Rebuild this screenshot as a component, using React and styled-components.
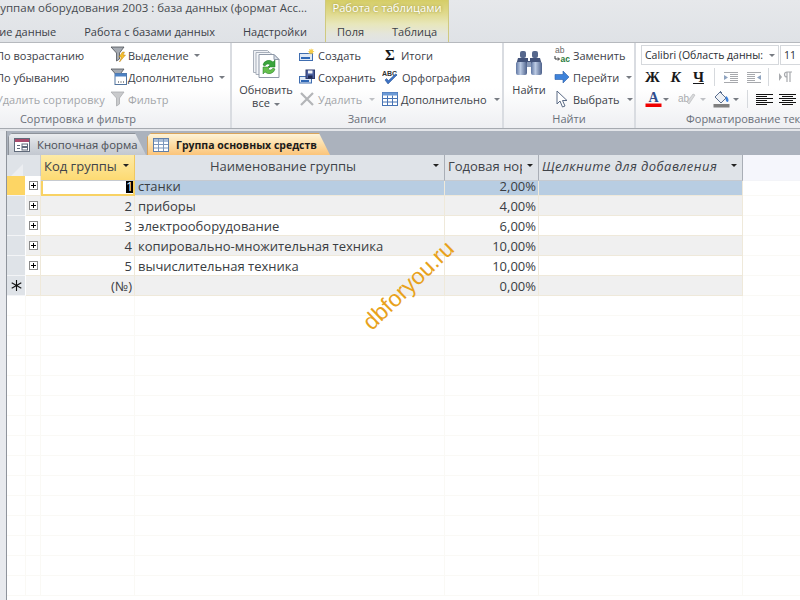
import styled, { createGlobalStyle } from "styled-components";

const GlobalStyle = createGlobalStyle`
  html, body { margin: 0; padding: 0; height: 100%; background: #fff; overflow: hidden; }
  #root { height: 100%; }
`;

const Page = styled.div`
  position: relative;
  width: 800px;
  height: 600px;
  overflow: hidden;
  font-family: "Open Sans", "Noto Sans", sans-serif;
  font-size: 11px;
  color: #3c4046;
`;

/* top: window title + ribbon tabs */
const TopBar = styled.div`
  display: flex;
  height: 42px;
  background: linear-gradient(#e6e8eb, #dfe2e6);
  border-bottom: 1px solid #b6b9be;
`;
const MainTop = styled.div`
  width: 325px;
  flex: none;
  display: flex;
  flex-direction: column;
  align-items: flex-end;
  overflow: hidden;
`;
const Title = styled.div`
  height: 16px;
  line-height: 16px;
  padding-right: 18px;
  font-size: 11.5px;
  white-space: nowrap;
  color: #474b50;
`;
const TabRow = styled.div`
  display: flex;
  height: 26px;
  padding: 5px ${(p) => p.$right || 0}px 0 0;
  margin-left: ${(p) => p.$ml || 0}px;
  box-sizing: border-box;
  align-items: center;
  white-space: nowrap;
`;
const RibbonTab = styled.span`
  padding: 0 14px;
  color: #3c4148;
`;
const ContextTop = styled.div`
  width: 124px;
  flex: none;
  box-sizing: border-box;
  background: linear-gradient(#d5cd66 0, #e0da8f 14px, #e8e7bb 24px, #e4e5dc 34px, #e0e3e6 42px);
  border-left: 1px solid #cfc97f;
  border-right: 1px solid #cfc97f;
`;
const ContextTitle = styled.div`
  height: 16px;
  line-height: 16px;
  font-size: 11.2px;
  text-align: center;
  color: #fff;
  text-shadow: 0 0 3px #8f8a30;
  white-space: nowrap;
`;

/* ribbon */
const Ribbon = styled.div`
  display: flex;
  height: 85px;
  background: linear-gradient(#fff 0, #fff 45px, #eeeff2 85px);
  border-bottom: 1px solid #a6aab0;
`;
const Group = styled.div`
  flex: none;
  width: ${(p) => p.$w}px;
  margin-left: ${(p) => p.$ml || 0}px;
  display: flex;
  flex-direction: column;
  box-sizing: border-box;
  border-right: ${(p) => (p.$last ? "0" : "2px solid #d9dce1")};
`;
const GroupBody = styled.div`
  height: 68px;
  display: flex;
  padding: 1px 0 0 ${(p) => p.$pl || 0}px;
  box-sizing: border-box;
`;
const FontBody = styled.div`
  height: 68px;
  padding-top: 1px;
  box-sizing: border-box;
`;
const GroupLabel = styled.div`
  height: 17px;
  line-height: 15px;
  text-align: ${(p) => (p.$pl ? "left" : "center")};
  padding-left: ${(p) => p.$pl || 0}px;
  color: #6a7079;
  white-space: nowrap;
`;
const ToolColumn = styled.div`
  width: ${(p) => p.$w}px;
  margin-left: ${(p) => p.$ml || 0}px;
  flex: none;
  display: flex;
  flex-direction: column;
`;
const Tool = styled.div`
  height: 22px;
  display: flex;
  align-items: center;
  gap: ${(p) => p.$gap ?? 3}px;
  white-space: nowrap;
  color: ${(p) => (p.$off ? "#a3a5a9" : "#3c4148")};
  svg { flex: none; }
`;
const Caret = styled.span`
  display: inline-block;
  margin-left: ${(p) => p.$ml ?? 4}px;
  border: 3px solid transparent;
  border-top: 3px solid ${(p) => (p.$off ? "#bfc1c5" : "#777b82")};
  border-bottom: 0;
  vertical-align: middle;
`;
const BigTool = styled.div`
  flex: none;
  width: ${(p) => p.$w}px;
  margin-left: ${(p) => p.$ml}px;
  display: flex;
  flex-direction: column;
  align-items: center;
  line-height: 13px;
  text-align: center;
  color: #3c4148;
  svg { margin: 6px 0 ${(p) => p.$below}px; }
`;

/* font group */
const FontRow = styled.div`
  display: flex;
  height: 22px;
  align-items: center;
  padding-left: 5px;
`;
const Combo = styled.div`
  width: ${(p) => p.$w}px;
  height: 20px;
  flex: none;
  box-sizing: border-box;
  margin-right: 1px;
  background: #fff;
  border: 1px solid #d5d8dc;
  padding: 0 3px;
  line-height: 18px;
  font-size: 10.5px;
  color: #2a2e33;
  display: flex;
  justify-content: space-between;
  align-items: center;
  white-space: nowrap;
  overflow: hidden;
`;
const FmtButton = styled.span`
  width: ${(p) => p.$w || 23}px;
  flex: none;
  text-align: center;
  font-family: "Liberation Serif", serif;
  font-size: 15px;
  font-weight: 700;
  font-style: ${(p) => (p.$i ? "italic" : "normal")};
  text-decoration: ${(p) => (p.$u ? "underline" : "none")};
  color: #17181a;
`;
const FmtSep = styled.span`
  width: 1px;
  height: 18px;
  flex: none;
  margin: 0 ${(p) => p.$m}px 0 ${(p) => p.$l ?? p.$m}px;
  background: #d6d9dd;
`;
const FontIcon = styled.span`
  width: ${(p) => p.$w}px;
  margin-left: ${(p) => p.$ml || 0}px;
  flex: none;
  display: flex;
  align-items: center;
`;

/* document tabs */
const Gap = styled.div`
  height: 2px;
  background: #e3e5e9;
`;
const Workspace = styled.div`
  display: flex;
  height: 469px;
`;
const NavSliver = styled.div`
  width: 7px;
  flex: none;
  box-sizing: border-box;
  background: #e8eaee;
  border-right: 1px solid #8f949c;
`;
const DocArea = styled.div`
  flex: 1;
  display: flex;
  flex-direction: column;
`;
const DocTabs = styled.div`
  height: 24px;
  flex: none;
  display: flex;
  align-items: flex-end;
  gap: 1px;
  padding-left: 1px;
  background: #abb2bd;
`;
const DocTab = styled.div`
  height: 22px;
  width: ${(p) => p.$w}px;
  flex: none;
  box-sizing: border-box;
  display: flex;
  align-items: center;
  gap: 7px;
  padding-left: 5px;
  border-top: 1px solid ${(p) => (p.$active ? "#d9a45a" : "#8d929a")};
  border-left: 1px solid ${(p) => (p.$active ? "#d9a45a" : "#8d929a")};
  clip-path: polygon(0 100%, 0 4px, 4px 0, ${(p) => p.$w - 11}px 0, ${(p) => p.$w}px 100%);
  white-space: nowrap;
  font-size: ${(p) => (p.$active ? 10.5 : 11.3)}px;
  font-weight: ${(p) => (p.$active ? 700 : 400)};
  color: ${(p) => (p.$active ? "#1b1b1b" : "#4a4e55")};
  background: ${(p) =>
    p.$active
      ? "linear-gradient(#fdf3d8, #fddfa9 45%, #fbc47a)"
      : "linear-gradient(#eaecef, #d3d7dd 50%, #c3c8d0)"};
  svg { flex: none; }
`;

/* datasheet */
const Sheet = styled.div`
  flex: 1;
  display: flex;
  flex-direction: column;
  overflow: hidden;
  font-size: 13px;
  color: #3a3d42;
`;
const Row = styled.div`
  display: grid;
  grid-template-columns: 19px 15px 94px 310px 94px 204px 1fr;
  height: ${(p) => p.$h || 20}px;
  flex: none;
`;
const Cell = styled.div`
  box-sizing: border-box;
  border-right: 1px solid #efe9da;
  border-bottom: 1px solid #efe9da;
  line-height: 20px;
  padding: 0 ${(p) => (p.$right ? 2 : 3)}px;
  text-align: ${(p) => (p.$right ? "right" : "left")};
  white-space: nowrap;
  overflow: hidden;
  background: ${(p) => (p.$sel ? "#b8cde2" : p.$alt ? "#f0f0f0" : "#fff")};
`;
const FillCell = styled.div`
  box-sizing: border-box;
  border-right: 1px solid #faf9f5;
  border-bottom: 1px solid #faf9f5;
`;
const BlankCell = styled.div`
  box-sizing: border-box;
  border-bottom: 1px solid #faf9f5;
`;
const ActiveCell = styled(Cell)`
  display: flex;
  justify-content: flex-end;
  align-items: center;
  border: 2px solid #f8d264;
  padding: 0;
`;
const SelText = styled.span`
  width: 7px;
  height: 14px;
  line-height: 14px;
  text-align: center;
  background: #000;
  color: #fff;
`;
const Selector = styled.div`
  box-sizing: border-box;
  background: ${(p) => (p.$current ? "#fdd564" : "#dfe3e8")};
  border-right: 1px solid #fff;
  border-bottom: 1px solid #f3f4f6;
  display: flex;
  align-items: center;
  justify-content: center;
`;
const Expander = styled(Cell)`
  display: flex;
  align-items: center;
  padding: 0 0 0 3px;
`;
const Plus = styled.span`
  position: relative;
  width: 9px;
  height: 9px;
  box-sizing: border-box;
  background: #fff;
  border: 1px solid #8a8a8a;
  &::before, &::after {
    content: "";
    position: absolute;
    background: #000;
  }
  &::before { left: 1px; top: 3px; width: 5px; height: 1px; }
  &::after { left: 3px; top: 1px; width: 1px; height: 5px; }
`;
const Corner = styled.div`
  grid-column: span 2;
  box-sizing: border-box;
  background: #dfe3e8;
  border-right: 1px solid #c6cad0;
  border-bottom: 1px solid #c6cad0;
  padding: 7px 0 0 4px;
`;
const Head = styled.div`
  box-sizing: border-box;
  display: flex;
  align-items: center;
  justify-content: ${(p) => (p.$center ? "center" : "flex-start")};
  position: relative;
  padding: 0 ${(p) => (p.$center ? 16 : 0)}px 3px 3px;
  line-height: 18px;
  white-space: nowrap;
  overflow: hidden;
  font-style: ${(p) => (p.$italic ? "italic" : "normal")};
  letter-spacing: ${(p) => (p.$italic ? 0.45 : 0)}px;
  color: #40444a;
  background: ${(p) => (p.$active ? "linear-gradient(#fdeaa6, #fdda72)" : "#dfe3e8")};
  border-right: 1px solid ${(p) => (p.$active ? "#f0c860" : "#a9aeb6")};
  border-bottom: 1px solid #c6cad0;
`;
const HeadText = styled.span`
  display: block;
  max-width: ${(p) => (p.$clip ? `${p.$clip}px` : "none")};
  overflow: hidden;
`;
const HeadArrow = styled.span`
  position: absolute;
  right: 5px;
  top: 9px;
  border: 3px solid transparent;
  border-top: 3px solid #222;
  border-bottom: 0;
`;
const HeadRest = styled.div`
  background: #f5f6fc;
  border-bottom: 1px solid #f3f4f8;
`;
const Watermark = styled.div`
  position: absolute;
  left: 343px;
  top: 270px;
  width: 130px;
  text-align: center;
  font-family: "Liberation Sans", Arial, sans-serif;
  font-size: 23px;
  line-height: 30px;
  color: #e8a21c;
  transform: rotate(-44deg);
  white-space: nowrap;
`;

/* icons */
const Funnel = ({ off }) => (
  <path d="M1 1h13L9.500 7v6l-3 2V7z" fill={off ? "#c9cacc" : "#a6abb2"} stroke={off ? "#a9abae" : "#4d5157"} strokeWidth=".8" />
);
const SelectionIcon = () => (
  <svg width="17" height="18" viewBox="0 0 17 18"><Funnel /><path d="M12.500 6L9 11h2.500l-2 5 6-7H13l1.500-3z" fill="#f6c02c" stroke="#b8801a" strokeWidth=".5" /></svg>
);
const AdvancedIcon = () => (
  <svg width="17" height="18" viewBox="0 0 17 18"><Funnel /><rect x="5" y="5.500" width="11.500" height="11" fill="#fff" stroke="#52749e" /><rect x="5" y="5.500" width="11.500" height="3" fill="#4d82c4" /><path d="M8 14h1M10.500 14h1M13 14h1" stroke="#333" /></svg>
);
const FilterIcon = () => (
  <svg width="17" height="17" viewBox="0 0 17 17"><Funnel off /></svg>
);
const RefreshIcon = () => (
  <svg width="27" height="28" viewBox="0 0 27 28">
    <path d="M.5.500h14l3 3v19H.5z" fill="#f0f2f6" stroke="#a9b0bb" />
    <path d="M3 2.500h14l3 3v19H3z" fill="#f4f6f9" stroke="#a9b0bb" />
    <path d="M6 4.500h15l5 5v18H6z" fill="#fff" stroke="#8f99a8" />
    <path d="M21 4.500v5h5z" fill="#dce3ec" stroke="#8f99a8" />
    <path d="M10 15a6 6 0 0 1 10-3l2-2v7h-7l2-2a3 3 0 0 0-5 1z" fill="#3aa53c" stroke="#1f7a25" strokeWidth=".5" />
    <path d="M22 19a6 6 0 0 1-10 3l-2 2v-7h7l-2 2a3 3 0 0 0 5-1z" fill="#66c04d" stroke="#1f7a25" strokeWidth=".5" />
  </svg>
);
const NewIcon = () => (
  <svg width="16" height="16" viewBox="0 0 16 16"><rect x="0.500" y="6.500" width="13" height="7" fill="#dfe9f6" stroke="#3f6db0" /><rect x="2" y="10" width="9" height="2" fill="#2f67b5" /><path d="M12 1l.7 1.700L14.500 2l-.7 1.800 1.700.7-1.700.7.7 1.800-1.800-.7-.7 1.700-.7-1.700-1.800.7.7-1.800L9 4.500l1.700-.7L10 2l1.800.7z" fill="#f6cc4a" /></svg>
);
const SaveIcon = () => (
  <svg width="16" height="16" viewBox="0 0 16 16"><rect x="0.500" y="7.500" width="12" height="6.500" fill="#dfe9f6" stroke="#3f6db0" /><rect x="2" y="11" width="8" height="2" fill="#2f67b5" /><rect x="7" y="1" width="8.500" height="8.500" fill="#4b5f9e" stroke="#2e3b6d" /><rect x="9" y="1.500" width="4.500" height="3" fill="#eef1f7" /><rect x="9" y="6.500" width="4.500" height="3" fill="#1f2a52" /></svg>
);
const DeleteIcon = () => (
  <svg width="16" height="16" viewBox="0 0 16 16"><path d="M2 2l12 12M14 2L2 14" stroke="#b3b5b8" strokeWidth="2.200" /></svg>
);
const SpellIcon = () => (
  <svg width="17" height="17" viewBox="0 0 17 17"><text x="0" y="7" fontSize="7" fontWeight="700" fontFamily="Liberation Sans" fill="#333">ABC</text><path d="M3 11l3 4 9-9-1.500-1L6.500 11.500 4.500 9.500z" fill="#3c71c4" stroke="#24508f" strokeWidth=".5" /></svg>
);
const TableIcon = () => (
  <svg width="16" height="16" viewBox="0 0 16 16"><rect x="0.500" y="1.500" width="15" height="13" fill="#fff" stroke="#4673b4" /><rect x="0.500" y="1.500" width="15" height="3" fill="#6c9ad6" /><path d="M5.500 4.500v10M10.500 4.500v10M.5 7.500h15M.5 11h15" stroke="#4673b4" /></svg>
);
const Binoculars = () => (
  <svg width="28" height="26" viewBox="0 0 28 26">
    <defs>
      <linearGradient id="bin" x1="0" x2="1" y1="0" y2="0">
        <stop offset="0" stopColor="#5f76a2" /><stop offset=".4" stopColor="#bccbe4" /><stop offset="1" stopColor="#4d618b" />
      </linearGradient>
    </defs>
    <rect x="5" y="1" width="6" height="7" rx="2" fill="#56678c" />
    <rect x="17" y="1" width="6" height="7" rx="2" fill="#56678c" />
    <path d="M3 8h10v3h2V8h10l2 7H16v1h-4v-1H1z" fill="#43537a" />
    <rect x="1" y="12" width="11" height="13" rx="2" fill="url(#bin)" />
    <rect x="16" y="12" width="11" height="13" rx="2" fill="url(#bin)" />
    <rect x="12" y="12" width="4" height="5" fill="#8a9ab8" />
  </svg>
);
const ReplaceIcon = () => (
  <svg width="16" height="18" viewBox="0 0 16 18"><text x="1" y="7" fontSize="8.500" fontFamily="Liberation Sans" fill="#666">ab</text><text x="6.500" y="16" fontSize="8.500" fontWeight="700" fontFamily="Liberation Sans" fill="#1f7a3a">ac</text><path d="M1 10v3h4M4 11.500L5.500 13 4 14.500" fill="none" stroke="#333" /></svg>
);
const GotoIcon = () => (
  <svg width="16" height="16" viewBox="0 0 16 16"><path d="M1 5.500h8V2l6 6-6 6v-3.500H1z" fill="#3f83da" stroke="#2a5da6" strokeWidth=".6" /></svg>
);
const PointerIcon = () => (
  <svg width="16" height="18" viewBox="0 0 16 18"><path d="M3 1v13l3-3 2.500 6 2.500-1-2.500-5.500H13z" fill="#fff" stroke="#5a6a85" /></svg>
);
const DocTabFormIcon = () => (
  <svg width="16" height="16" viewBox="0 0 16 16"><rect x="0.500" y="1.500" width="15" height="13" fill="#fff" stroke="#606a7a" /><rect x="1" y="2" width="14" height="3" fill="#a84a6c" /><path d="M3 8h3v1H3zM3 11h3v1H3z" fill="#606a7a" /><rect x="8" y="7" width="5.500" height="2.500" fill="none" stroke="#606a7a" /><rect x="8" y="10.500" width="5.500" height="2.500" fill="none" stroke="#606a7a" /></svg>
);
const DocTabTableIcon = () => (
  <svg width="16" height="14" viewBox="0 0 16 14"><rect x="0.500" y="0.500" width="15" height="13" fill="#fff" stroke="#5f7faa" /><rect x="1" y="1" width="14" height="3" fill="#a9bdd8" /><path d="M5.500 1v12M10.500 1v12M1 6.500h14M1 10h14" stroke="#7d97bb" /></svg>
);
const NewRowIcon = () => (
  <svg width="11" height="11" viewBox="0 0 11 11"><path d="M5.500 0v11M.7 2.700l9.600 5.600M10.300 2.700L.7 8.300" stroke="#111" strokeWidth="1.100" /></svg>
);
const Lines = ({ center }) => (
  <svg width="17" height="13" viewBox="0 0 17 13">
    {[1, 3, 5, 7, 9, 11].map((y, i) => {
      const odd = i % 2 === 1;
      const from = odd && center ? 3 : 0;
      const to = odd ? (center ? 14 : 11) : 17;
      return <path key={y} d={`M${from} ${y + 0.5}H${to}`} stroke="#111" />;
    })}
  </svg>
);
const IndentIcon = ({ flip }) => (
  <svg width="16" height="13" viewBox="0 0 16 13">
    <g transform={flip ? "translate(16 0) scale(-1 1)" : undefined}>
      {[1, 3, 5, 7, 9, 11].map((y, i) => (
        <path key={y} d={`M${i > 0 && i < 5 ? 7 : 1} ${y + 0.5}H15`} stroke="#a7a9ad" />
      ))}
      <path d="M1 4l4 2.500-4 2.500z" fill="#8ea3bf" />
    </g>
  </svg>
);
const ParaIcon = () => (
  <svg width="13" height="12" viewBox="0 0 13 12"><path d="M0 2l3 4-3 4z" fill="#a7a9ad" /><path d="M8 1h5M8 1a2.500 2.500 0 0 0 0 5zM8 1v10M11 1v10" fill="none" stroke="#a7a9ad" strokeWidth="1.200" /></svg>
);
const FontColorIcon = () => (
  <svg width="17" height="18" viewBox="0 0 17 18"><text x="8.500" y="12" textAnchor="middle" fontSize="14" fontWeight="700" fontFamily="Liberation Serif" fill="#2f4c8c">A</text><rect x="0.500" y="13.500" width="16" height="3.500" fill="#f00000" /></svg>
);
const HighlightIcon = () => (
  <svg width="18" height="14" viewBox="0 0 18 14"><text x="0" y="10" fontSize="10" fontFamily="Liberation Sans" fill="#a9abae">ab</text><path d="M11 12l6-9-2-1-6 8z" fill="#d9dadc" stroke="#b1b3b6" strokeWidth=".6" /></svg>
);
const BucketIcon = () => (
  <svg width="17" height="18" viewBox="0 0 17 18"><path d="M2 7l5-5 6 6-5 5z" fill="#eef1f5" stroke="#5b6f90" /><path d="M7 1l2 2" stroke="#5b6f90" /><path d="M13 6c3 2 3 6 1.500 6S12 9 13 6z" fill="#3f83da" /><rect x="0.500" y="14" width="16" height="3.500" fill="#7f7f7f" /></svg>
);

const rows = [
  { id: 1, name: "станки", rate: "2,00%" },
  { id: 2, name: "приборы", rate: "4,00%" },
  { id: 3, name: "электрооборудование", rate: "6,00%" },
  { id: 4, name: "копировально-множительная техника", rate: "10,00%" },
  { id: 5, name: "вычислительная техника", rate: "10,00%" },
];
const filler = Array.from({ length: 15 }, (_, i) => i);

export default function App() {
  return (
    <Page>
      <GlobalStyle />
      <TopBar>
        <MainTop>
          <Title>группам оборудования 2003 : база данных (формат Acc...</Title>
          <TabRow $right={4}>
            <RibbonTab>Внешние данные</RibbonTab>
            <RibbonTab>Работа с базами данных</RibbonTab>
            <RibbonTab>Надстройки</RibbonTab>
          </TabRow>
        </MainTop>
        <ContextTop>
          <ContextTitle>Работа с таблицами</ContextTitle>
          <TabRow $ml={-3}>
            <RibbonTab>Поля</RibbonTab>
            <RibbonTab>Таблица</RibbonTab>
          </TabRow>
        </ContextTop>
      </TopBar>

      <Ribbon>
        <Group $w={306} $ml={-74}>
          <GroupBody $pl={70}>
            <ToolColumn $w={114}>
              <Tool>По возрастанию</Tool>
              <Tool>По убыванию</Tool>
              <Tool $off>Удалить сортировку</Tool>
            </ToolColumn>
            <ToolColumn $w={110}>
              <Tool $gap={1}><SelectionIcon />Выделение<Caret /></Tool>
              <Tool $gap={1}><AdvancedIcon />Дополнительно<Caret /></Tool>
              <Tool $gap={1} $off><FilterIcon />Фильтр</Tool>
            </ToolColumn>
          </GroupBody>
          <GroupLabel>Сортировка и фильтр</GroupLabel>
        </Group>

        <Group $w={272}>
          <GroupBody>
            <BigTool $w={60} $ml={4} $below={5}>
              <RefreshIcon />
              <span>Обновить</span>
              <span>все<Caret /></span>
            </BigTool>
            <ToolColumn $w={83} $ml={3}>
              <Tool><NewIcon />Создать</Tool>
              <Tool><SaveIcon />Сохранить</Tool>
              <Tool $off><DeleteIcon />Удалить<Caret $off /></Tool>
            </ToolColumn>
            <ToolColumn $w={118}>
              <Tool><FmtButton $w={16}>Σ</FmtButton>Итоги</Tool>
              <Tool><SpellIcon />Орфография</Tool>
              <Tool><TableIcon />Дополнительно<Caret /></Tool>
            </ToolColumn>
          </GroupBody>
          <GroupLabel>Записи</GroupLabel>
        </Group>

        <Group $w={132}>
          <GroupBody>
            <BigTool $w={50} $ml={0} $below={7}>
              <Binoculars />
              <span>Найти</span>
            </BigTool>
            <ToolColumn $w={80}>
              <Tool><ReplaceIcon />Заменить</Tool>
              <Tool><GotoIcon />Перейти<Caret /></Tool>
              <Tool><PointerIcon />Выбрать<Caret /></Tool>
            </ToolColumn>
          </GroupBody>
          <GroupLabel>Найти</GroupLabel>
        </Group>

        <Group $w={165} $last>
          <FontBody>
            <FontRow>
              <Combo $w={138}>Calibri (Область данны:<Caret $ml={0} /></Combo>
              <Combo $w={40}>11</Combo>
            </FontRow>
            <FontRow>
              <FmtButton>Ж</FmtButton>
              <FmtButton $i>К</FmtButton>
              <FmtButton $u>Ч</FmtButton>
              <FmtSep $l={4} $m={0} />
              <FontIcon $w={23} $ml={8}><IndentIcon /></FontIcon>
              <FontIcon $w={16}><IndentIcon flip /></FontIcon>
              <FmtSep $m={6} />
              <FontIcon $w={16} $ml={4}><ParaIcon /></FontIcon>
            </FontRow>
            <FontRow>
              <FontIcon $w={18} $ml={4}><FontColorIcon /></FontIcon>
              <FontIcon $w={15}><Caret $ml={0} /></FontIcon>
              <FontIcon $w={22}><HighlightIcon /></FontIcon>
              <FontIcon $w={13}><Caret $ml={0} $off /></FontIcon>
              <FontIcon $w={20}><BucketIcon /></FontIcon>
              <FontIcon $w={14}><Caret $ml={0} /></FontIcon>
              <FmtSep $l={0} $m={0} />
              <FontIcon $w={23} $ml={8}><Lines /></FontIcon>
              <FontIcon $w={18}><Lines center /></FontIcon>
            </FontRow>
          </FontBody>
          <GroupLabel $pl={50}>Форматирование текста</GroupLabel>
        </Group>
      </Ribbon>
      <Gap />

      <Workspace>
        <NavSliver />
        <DocArea>
          <DocTabs>
            <DocTab $w={138}><DocTabFormIcon />Кнопочная форма</DocTab>
            <DocTab $w={183} $active><DocTabTableIcon />Группа основных средств</DocTab>
          </DocTabs>
          <Sheet>
            <Row $h={21}>
              <Corner>
                <svg width="12" height="12" viewBox="0 0 12 12"><path d="M0 12L12 0v12z" fill="#eceef1" /></svg>
              </Corner>
              <Head $active>Код группы<HeadArrow /></Head>
              <Head $center>Наименование группы<HeadArrow /></Head>
              <Head><HeadText $clip={74}>Годовая норма</HeadText><HeadArrow /></Head>
              <Head $italic>Щелкните для добавления<HeadArrow /></Head>
              <HeadRest />
            </Row>
            {rows.map((r, i) => {
              const sel = i === 0;
              const alt = i % 2 === 1;
              return (
                <Row key={r.id}>
                  <Selector $current={sel} />
                  <Expander $alt={alt}><Plus /></Expander>
                  {sel ? (
                    <ActiveCell $right><SelText>{r.id}</SelText></ActiveCell>
                  ) : (
                    <Cell $right $alt={alt}>{r.id}</Cell>
                  )}
                  <Cell $sel={sel} $alt={alt}>{r.name}</Cell>
                  <Cell $right $sel={sel} $alt={alt}>{r.rate}</Cell>
                  <Cell $sel={sel} $alt={alt} />
                  <BlankCell />
                </Row>
              );
            })}
            <Row>
              <Selector><NewRowIcon /></Selector>
              <Cell $alt />
              <Cell $right $alt>(№)</Cell>
              <Cell $alt />
              <Cell $right $alt>0,00%</Cell>
              <Cell $alt />
              <BlankCell />
            </Row>
            {filler.map((i) => (
              <Row key={i}>
                <FillCell />
                <FillCell />
                <FillCell />
                <FillCell />
                <FillCell />
                <FillCell />
                <BlankCell />
              </Row>
            ))}
          </Sheet>
        </DocArea>
      </Workspace>
      <Watermark>dbforyou.ru</Watermark>
    </Page>
  );
}
